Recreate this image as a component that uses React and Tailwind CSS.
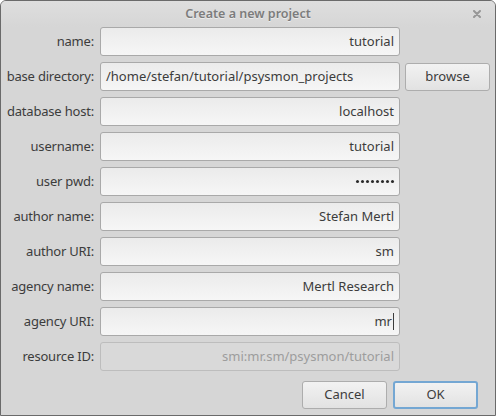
import React from 'react';

const fields = [
  { label: 'name:', value: 'tutorial' },
  { label: 'base directory:', value: '/home/stefan/tutorial/psysmon_projects', left: true, browse: true },
  { label: 'database host:', value: 'localhost' },
  { label: 'username:', value: 'tutorial' },
  { label: 'user pwd:', value: '', pwd: true },
  { label: 'author name:', value: 'Stefan Mertl' },
  { label: 'author URI:', value: 'sm' },
  { label: 'agency name:', value: 'Mertl Research' },
  { label: 'agency URI:', value: 'mr', caret: true },
  { label: 'resource ID:', value: 'smi:mr.sm/psysmon/tutorial', disabled: true },
];

const Field = ({ f }) => (
  <div className="flex items-center h-[29px]">
    <div className="w-[99px] shrink-0 pr-[6px] text-right text-[#3c3c3c] whitespace-nowrap tracking-[-0.2px]">
      {f.label}
    </div>
    <div
      className={`w-[300px] shrink-0 h-[29px] rounded-[3px] border flex items-center px-[5px] ${
        f.left ? 'justify-start' : 'justify-end'
      } ${
        f.disabled
          ? 'border-[#bdbdbd] bg-[#d9d9d9] text-[#9d9d9d]'
          : 'border-[#a9a9a9] bg-gradient-to-b from-[#ebebeb] to-[#f6f6f6] text-[#3c3c3c]'
      }`}
    >
      {f.pwd ? (
        <span className="flex gap-[2px]">
          {[0, 1, 2, 3, 4, 5, 6, 7].map((i) => (
            <span key={i} className="w-[3px] h-[3px] rounded-full bg-[#2a2a2a]" />
          ))}
        </span>
      ) : (
        <span>{f.value}</span>
      )}
      {f.caret && <span className="ml-[1px] w-px h-[17px] bg-[#3c3c3c]" />}
    </div>
    {f.browse && (
      <button className="ml-[5px] w-[85px] shrink-0 h-[28px] rounded-[3px] border border-[#adadad] bg-gradient-to-b from-[#f2f2f2] to-[#e2e2e2] text-[#3c3c3c]">
        browse
      </button>
    )}
  </div>
);

export default function App() {
  return (
    <div
      className="w-[496px] h-[416px] bg-[#d6d6d6] border border-[#6a6a6a] rounded-t-[6px] flex flex-col text-[13px] overflow-hidden"
      style={{ fontFamily: '"Noto Sans", "DejaVu Sans", sans-serif' }}
    >
      <div className="relative h-[26px] shrink-0 flex items-center justify-center text-[#7c7c7c] font-semibold text-[12.5px] bg-gradient-to-b from-[#dedede] to-[#d6d6d6] [text-shadow:0_1px_0_#ececec]">
        Create a new project
        <svg className="absolute right-[14px] top-[9px]" width="8" height="8" viewBox="0 0 8 8">
          <path d="M1 1L7 7M7 1L1 7" stroke="#979797" strokeWidth="2" strokeLinecap="round" />
        </svg>
      </div>
      <div className="flex flex-col gap-[6px]">
        {fields.map((f) => (
          <Field key={f.label} f={f} />
        ))}
      </div>
      <div className="flex justify-end gap-[6px] pr-[17px] mt-[10px]">
        <button className="w-[85px] h-[28px] rounded-[3px] border border-[#adadad] bg-gradient-to-b from-[#f2f2f2] to-[#e2e2e2] text-[#3c3c3c]">
          Cancel
        </button>
        <button className="w-[85px] h-[28px] rounded-[3px] border-2 border-[#74a7d3] bg-gradient-to-b from-[#f2f2f2] to-[#e2e2e2] text-[#3c3c3c]">
          OK
        </button>
      </div>
    </div>
  );
}
